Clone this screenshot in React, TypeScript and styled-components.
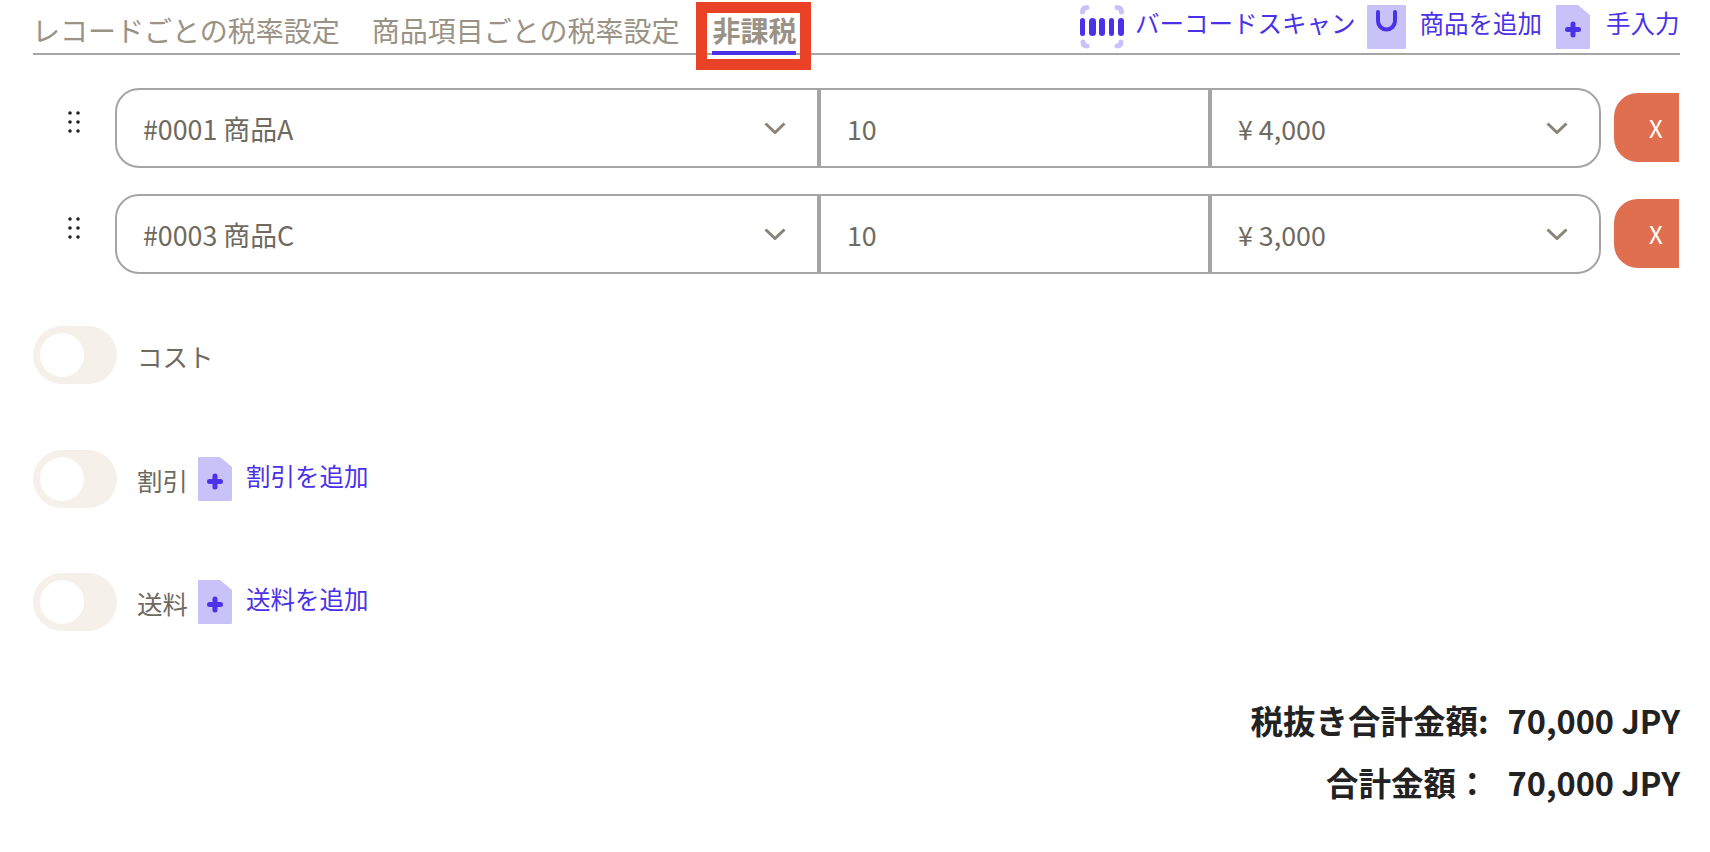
import React from "react";
import styled, { createGlobalStyle } from "styled-components";

const Global = createGlobalStyle`
  html, body { margin: 0; padding: 0; background: #fff; overflow: hidden; }
  body { font-family: "Noto Sans CJK JP", "Noto Sans", sans-serif; }
  * { box-sizing: border-box; }
`;

const Page = styled.div`
  width: 1710px;
  height: 852px;
  padding: 0 30px 0 33px;
  overflow: hidden;
`;
const Header = styled.header`
  height: 55px;
  border-bottom: 2px solid #a5a5a5;
  display: flex;
  justify-content: space-between;
  align-items: flex-start;
`;
const Tabs = styled.nav`
  display: flex;
  gap: 32px;
  padding-top: 10px;
  margin-left: -1px;
`;
const Tab = styled.div<{ $active?: boolean }>`
  position: relative;
  font-size: 28px;
  line-height: 40px;
  height: 45px;
  color: #9a9284;
  font-weight: ${(p) => (p.$active ? 700 : 400)};
  ${(p) => p.$active && "border-bottom: 4px solid #4a32e8; margin-left: 1px;"}
`;
const Highlight = styled.span`
  position: absolute;
  left: -16px;
  right: -15px;
  top: -8px;
  bottom: -19px;
  border: 11px solid #e94227;
  pointer-events: none;
`;
const Actions = styled.div`
  display: flex;
  align-items: flex-start;
  padding-top: 5px;
  width: 600px;
`;
const ActionLink = styled.a<{ $gap: number; $after: number }>`
  display: flex;
  align-items: flex-start;
  gap: ${(p) => p.$gap}px;
  margin-right: ${(p) => p.$after}px;
  color: #4a32e8;
  font-size: 24.5px;
  line-height: 36px;
  white-space: nowrap;
`;
const Rows = styled.div`
  display: flex;
  flex-direction: column;
  gap: 26px;
  margin-top: 33px;
`;
const Row = styled.div`
  display: flex;
  align-items: flex-start;
  width: 1646px;
  overflow: hidden;
`;
const Handle = styled.svg`
  width: 12px;
  height: 22px;
  margin: 23px 35px 0 35px;
  flex: none;
`;
const Field = styled.div`
  display: flex;
  width: 1486px;
  height: 80px;
  border: 2px solid #a5a5a5;
  border-radius: 24px;
  flex: none;
`;
const Segment = styled.div<{ $width?: number; $divider?: boolean; $inset: number }>`
  display: flex;
  align-items: center;
  justify-content: space-between;
  ${(p) => (p.$width ? `width: ${p.$width}px;` : "flex: 1;")}
  ${(p) => p.$divider && "border-right: 4px solid #a5a5a5;"}
  padding: 0 31px 0 ${(p) => p.$inset}px;
  color: #6f6a60;
  font-size: 26.8px;
`;
const Chevron = styled.svg`
  width: 22px;
  height: 12px;
`;
const Remove = styled.div`
  flex: none;
  width: 90px;
  height: 69px;
  margin: 5px 0 0 13px;
  border-radius: 24px;
  background: #e06f50;
  color: #fff;
  font-size: 24px;
  display: flex;
  align-items: center;
  padding-left: 35px;
`;
const Options = styled.div`
  display: flex;
  flex-direction: column;
  gap: 65.5px;
  margin-top: 52px;
`;
const OptionRow = styled.div`
  display: flex;
  align-items: flex-start;
  height: 58px;
`;
const Toggle = styled.div`
  width: 84px;
  height: 58px;
  border-radius: 29px;
  background: #f5f0ea;
  padding: 7px;
  flex: none;
`;
const Knob = styled.div`
  width: 44px;
  height: 44px;
  border-radius: 50%;
  background: #fff;
`;
const OptionLabel = styled.span`
  margin: 12px 0 0 20px;
  font-size: 25.5px;
  line-height: 36px;
  color: #6f6a60;
  width: 61px;
  white-space: nowrap;
`;
const AddLink = styled.a`
  display: flex;
  align-items: flex-start;
  gap: 14px;
  color: #4a32e8;
  font-size: 24.5px;
  line-height: 36px;
  margin-top: 7px;
`;
const AddText = styled.span`
  margin-top: 1px;
`;
const Totals = styled.div`
  display: grid;
  grid-template-columns: auto auto;
  justify-content: end;
  column-gap: 19px;
  row-gap: 16px;
  margin-top: 66px;
  width: 1647px;
  font-size: 32.5px;
  line-height: 46px;
  font-weight: 700;
  color: #222;
`;
const TotalLabel = styled.div`
  text-align: right;
`;

const IconSvg = styled.svg`
  flex: none;
  display: block;
`;

const DocPlus = () => (
  <IconSvg width="34" height="44" viewBox="0 0 34 44">
    <path d="M1 0h21l12 10v33a1 1 0 0 1-1 1H1a1 1 0 0 1-1-1V1a1 1 0 0 1 1-1z" fill="#c9c2f9" />
    <path d="M17 19v11M11.500 24.500h11" stroke="#4a32e8" strokeWidth="5" strokeLinecap="round" />
  </IconSvg>
);
const Bag = () => (
  <IconSvg width="39" height="44" viewBox="0 0 39 44">
    <rect width="39" height="44" rx="1" fill="#c9c2f9" />
    <path d="M11 7v9a8.500 8.500 0 0 0 17 0V7" fill="none" stroke="#4a32e8" strokeWidth="4" strokeLinecap="round" />
  </IconSvg>
);
const Barcode = () => (
  <IconSvg width="44" height="44" viewBox="0 0 44 44">
    <g fill="none" stroke="#c9c2f9" strokeWidth="5" strokeLinecap="round">
      <path d="M2.500 7Q2.500 2.500 7 2.500M41.500 7Q41.500 2.500 37 2.500M3 37Q3 41 7 41M41 37Q41 41 37 41" />
    </g>
    <g fill="#4a32e8">
      <rect x="0" y="13" width="5" height="18" rx="2.500" />
      <rect x="9" y="13" width="7" height="18" rx="3.500" />
      <rect x="19" y="13" width="6" height="18" rx="3" />
      <rect x="29" y="13" width="5" height="18" rx="2.500" />
      <rect x="38" y="13" width="6" height="18" rx="3" />
    </g>
  </IconSvg>
);
const DragDots = () => (
  <Handle viewBox="0 0 12 22">
    {[2, 11, 20].map((y) =>
      [2, 10].map((x) => <circle key={`${x}-${y}`} cx={x} cy={y} r="1.800" fill="#222" />)
    )}
  </Handle>
);
const Caret = () => (
  <Chevron viewBox="0 0 22 12">
    <path d="M1.500 1.500l9.500 9 9.500-9" fill="none" stroke="#8a8478" strokeWidth="3" />
  </Chevron>
);

const items = [
  { name: "#0001 商品A", price: "¥ 4,000" },
  { name: "#0003 商品C", price: "¥ 3,000" },
];

export default function App() {
  return (
    <Page>
      <Global />
      <Header>
        <Tabs>
          <Tab>レコードごとの税率設定</Tab>
          <Tab>商品項目ごとの税率設定</Tab>
          <Tab $active>
            非課税
            <Highlight />
          </Tab>
        </Tabs>
        <Actions>
          <ActionLink $gap={11} $after={11}>
            <Barcode />
            <span>バーコードスキャン</span>
          </ActionLink>
          <ActionLink $gap={14} $after={14}>
            <Bag />
            <span>商品を追加</span>
          </ActionLink>
          <ActionLink $gap={16} $after={0}>
            <DocPlus />
            <span>手入力</span>
          </ActionLink>
        </Actions>
      </Header>
      <Rows>
        {items.map((it) => (
          <Row key={it.name}>
            <DragDots />
            <Field>
              <Segment $width={704} $divider $inset={26}>
                {it.name}
                <Caret />
              </Segment>
              <Segment $width={391} $divider $inset={26}>
                10
              </Segment>
              <Segment $inset={26}>
                {it.price}
                <Caret />
              </Segment>
            </Field>
            <Remove>X</Remove>
          </Row>
        ))}
      </Rows>
      <Options>
        <OptionRow>
          <Toggle>
            <Knob />
          </Toggle>
          <OptionLabel>コスト</OptionLabel>
        </OptionRow>
        <OptionRow>
          <Toggle>
            <Knob />
          </Toggle>
          <OptionLabel>割引</OptionLabel>
          <AddLink>
            <DocPlus />
            <AddText>割引を追加</AddText>
          </AddLink>
        </OptionRow>
        <OptionRow>
          <Toggle>
            <Knob />
          </Toggle>
          <OptionLabel>送料</OptionLabel>
          <AddLink>
            <DocPlus />
            <AddText>送料を追加</AddText>
          </AddLink>
        </OptionRow>
      </Options>
      <Totals>
        <TotalLabel>税抜き合計金額:</TotalLabel>
        <div>70,000 JPY</div>
        <TotalLabel>合計金額：</TotalLabel>
        <div>70,000 JPY</div>
      </Totals>
    </Page>
  );
}
